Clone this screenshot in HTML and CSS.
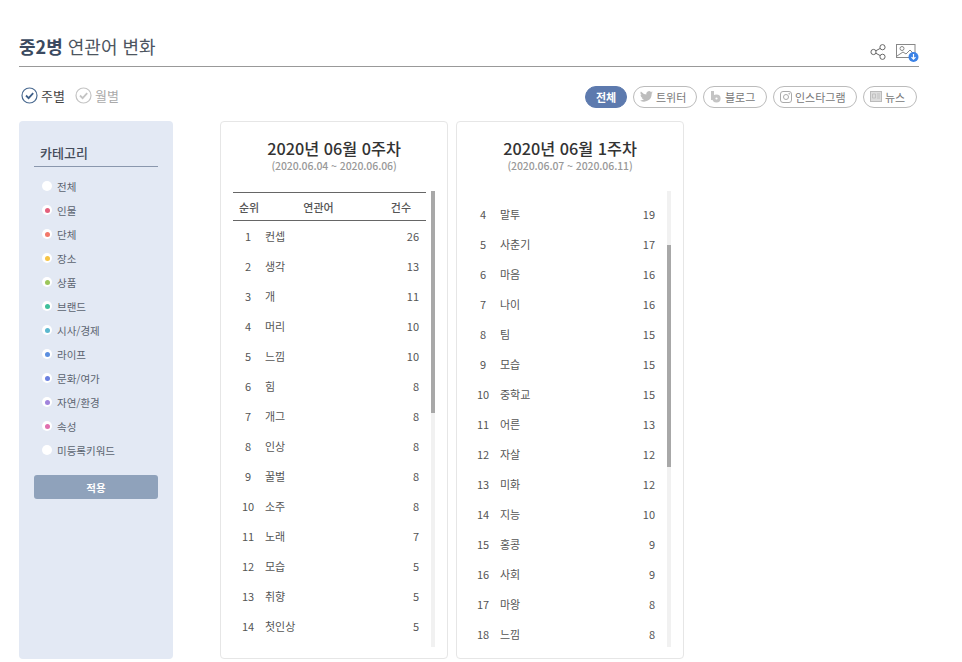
FILE: index.html
```html
<!DOCTYPE html>
<html lang="ko">
<head>
  <meta charset="UTF-8" />
  <title>중2병 연관어 변화</title>
  <link rel="stylesheet" href="styles.css">
</head>
<body>

<div class="container">
  <div class="title-bar">
    <h1><strong>중2병</strong> 연관어 변화</h1>
    <div class="title-icons">
      <svg class="icon-share" width="16" height="16" viewBox="0 0 16 16" fill="none" stroke="#666" stroke-width="1">
        <circle cx="3.500" cy="8" r="2.600"/>
        <circle cx="12.500" cy="3.200" r="2.600"/>
        <circle cx="12.500" cy="12.800" r="2.600"/>
        <path d="M5.800 6.800 10.200 4.400M5.800 9.200l4.400 2.400"/>
      </svg>
      <span class="icon-image">
        <svg width="24" height="20" viewBox="0 0 24 20" fill="none">
          <rect x="1.500" y="1.500" width="18.500" height="13" stroke="#888"/>
          <circle cx="7" cy="5.500" r="2" stroke="#888"/>
          <path d="M2 13 8 9l3 2 4-4 5 5" stroke="#888"/>
          <circle cx="18.500" cy="14" r="5" fill="#3b82e6"/>
          <path d="M18.500 11v5M16.500 14.200l2 2 2-2" stroke="#fff" stroke-width="1.200"/>
        </svg>
      </span>
    </div>
  </div>

  <div class="filter-bar">
    <div class="period">
      <span class="period-item active">
        <svg width="17" height="17" viewBox="0 0 17 17" fill="none">
          <circle cx="8.500" cy="8.500" r="7.500" stroke="#4a6a90" stroke-width="1.200"/>
          <path d="M5 8.500l2.600 2.600L12.200 6.200" stroke="#3f5f88" stroke-width="1.800"/>
        </svg>
        주별
      </span>
      <span class="period-item">
        <svg width="17" height="17" viewBox="0 0 17 17" fill="none">
          <circle cx="8.500" cy="8.500" r="7.500" stroke="#c4c4c4" stroke-width="1.200"/>
          <path d="M5 8.500l2.600 2.600L12.200 6.200" stroke="#c4c4c4" stroke-width="1.800"/>
        </svg>
        월별
      </span>
    </div>
    <div class="channels">
      <span class="pill selected">전체</span>
      <span class="pill">
        <svg width="13" height="11" viewBox="0 0 24 20" fill="#bdbdbd"><path d="M24 2.400a9.800 9.800 0 0 1-2.800.8A4.900 4.900 0 0 0 23.300.5a9.800 9.800 0 0 1-3.100 1.200 4.900 4.900 0 0 0-8.400 4.500A14 14 0 0 1 1.700.9a4.900 4.900 0 0 0 1.500 6.600 4.900 4.900 0 0 1-2.200-.6v.1a4.900 4.900 0 0 0 3.900 4.800 4.900 4.900 0 0 1-2.200.1 4.900 4.900 0 0 0 4.600 3.400A9.900 9.900 0 0 1 0 17.300 14 14 0 0 0 21.500 4.900v-.6A10 10 0 0 0 24 2.400z"/></svg>
        트위터
      </span>
      <span class="pill">
        <svg width="12" height="13" viewBox="0 0 12 13" fill="none" stroke="#c4c4c4"><path d="M2.500 1v9" stroke-width="3"/><circle cx="6.500" cy="8.500" r="2.600" stroke-width="3"/></svg>
        블로그
      </span>
      <span class="pill">
        <svg width="12" height="12" viewBox="0 0 12 12" fill="none" stroke="#aaa"><rect x=".5" y=".5" width="11" height="11" rx="2.500"/><circle cx="6" cy="6" r="2.500"/><circle cx="9.200" cy="2.800" r=".4"/></svg>
        인스타그램
      </span>
      <span class="pill">
        <svg width="12" height="11" viewBox="0 0 12 11" fill="#ddd" stroke="#bbb"><rect x=".5" y=".5" width="11" height="10"/><path d="M2.500 3h3v4h-3zM7 3h3M7 5h3M7 7h3" stroke-width=".8"/></svg>
        뉴스
      </span>
    </div>
  </div>

  <div class="content">
    <aside class="sidebar">
      <h2>카테고리</h2>
      <ul class="category-list">
        <li><i class="dot"></i>전체</li>
        <li><i class="dot c-person"></i>인물</li>
        <li><i class="dot c-group"></i>단체</li>
        <li><i class="dot c-place"></i>장소</li>
        <li><i class="dot c-goods"></i>상품</li>
        <li><i class="dot c-brand"></i>브랜드</li>
        <li><i class="dot c-news"></i>시사/경제</li>
        <li><i class="dot c-life"></i>라이프</li>
        <li><i class="dot c-culture"></i>문화/여가</li>
        <li><i class="dot c-nature"></i>자연/환경</li>
        <li><i class="dot c-attr"></i>속성</li>
        <li><i class="dot"></i>미등록키워드</li>
      </ul>
      <button class="apply-btn">적용</button>
    </aside>

    <section class="card">
      <h3>2020년 06월 0주차</h3>
      <p class="range">(2020.06.04 ~ 2020.06.06)</p>
      <div class="table-wrap">
        <div class="table-body">
          <div class="table-head">
            <span class="col-rank">순위</span>
            <span class="col-word">연관어</span>
            <span class="col-count">건수</span>
          </div>
          <ul class="rank-list">
            <li><span class="col-rank">1</span><span class="col-word">컨셉</span><span class="col-count">26</span></li>
            <li><span class="col-rank">2</span><span class="col-word">생각</span><span class="col-count">13</span></li>
            <li><span class="col-rank">3</span><span class="col-word">개</span><span class="col-count">11</span></li>
            <li><span class="col-rank">4</span><span class="col-word">머리</span><span class="col-count">10</span></li>
            <li><span class="col-rank">5</span><span class="col-word">느낌</span><span class="col-count">10</span></li>
            <li><span class="col-rank">6</span><span class="col-word">힘</span><span class="col-count">8</span></li>
            <li><span class="col-rank">7</span><span class="col-word">개그</span><span class="col-count">8</span></li>
            <li><span class="col-rank">8</span><span class="col-word">인상</span><span class="col-count">8</span></li>
            <li><span class="col-rank">9</span><span class="col-word">꿀벌</span><span class="col-count">8</span></li>
            <li><span class="col-rank">10</span><span class="col-word">소주</span><span class="col-count">8</span></li>
            <li><span class="col-rank">11</span><span class="col-word">노래</span><span class="col-count">7</span></li>
            <li><span class="col-rank">12</span><span class="col-word">모습</span><span class="col-count">5</span></li>
            <li><span class="col-rank">13</span><span class="col-word">취향</span><span class="col-count">5</span></li>
            <li><span class="col-rank">14</span><span class="col-word">첫인상</span><span class="col-count">5</span></li>
          </ul>
        </div>
        <div class="scroll-track"><div class="scroll-thumb"></div></div>
      </div>
    </section>

    <section class="card">
      <h3>2020년 06월 1주차</h3>
      <p class="range">(2020.06.07 ~ 2020.06.11)</p>
      <div class="table-wrap">
        <div class="table-body scrolled">
          <ul class="rank-list">
            <li><span class="col-rank">4</span><span class="col-word">말투</span><span class="col-count">19</span></li>
            <li><span class="col-rank">5</span><span class="col-word">사춘기</span><span class="col-count">17</span></li>
            <li><span class="col-rank">6</span><span class="col-word">마음</span><span class="col-count">16</span></li>
            <li><span class="col-rank">7</span><span class="col-word">나이</span><span class="col-count">16</span></li>
            <li><span class="col-rank">8</span><span class="col-word">팀</span><span class="col-count">15</span></li>
            <li><span class="col-rank">9</span><span class="col-word">모습</span><span class="col-count">15</span></li>
            <li><span class="col-rank">10</span><span class="col-word">중학교</span><span class="col-count">15</span></li>
            <li><span class="col-rank">11</span><span class="col-word">어른</span><span class="col-count">13</span></li>
            <li><span class="col-rank">12</span><span class="col-word">자살</span><span class="col-count">12</span></li>
            <li><span class="col-rank">13</span><span class="col-word">미화</span><span class="col-count">12</span></li>
            <li><span class="col-rank">14</span><span class="col-word">지능</span><span class="col-count">10</span></li>
            <li><span class="col-rank">15</span><span class="col-word">홍콩</span><span class="col-count">9</span></li>
            <li><span class="col-rank">16</span><span class="col-word">사회</span><span class="col-count">9</span></li>
            <li><span class="col-rank">17</span><span class="col-word">마왕</span><span class="col-count">8</span></li>
            <li><span class="col-rank">18</span><span class="col-word">느낌</span><span class="col-count">8</span></li>
          </ul>
        </div>
        <div class="scroll-track"><div class="scroll-thumb lower"></div></div>
      </div>
    </section>
  </div>
</div>

</body>
</html>
```

FILE: styles.css
```css
* {
  margin: 0;
  padding: 0;
  box-sizing: border-box;
}

html, body {
  background: #fff;
  font-family: "Noto Sans CJK KR", "Noto Sans", sans-serif;
  color: #555;
  height: 100%;
  overflow: hidden;
}

ul {
  list-style: none;
}

.container {
  width: 900px;
  margin-left: 19px;
  padding-top: 32px;
}

.title-bar {
  display: flex;
  justify-content: space-between;
  align-items: flex-end;
  height: 35px;
  border-bottom: 1px solid #999;
}

h1 {
  font-size: 18px;
  font-weight: 400;
  line-height: 30px;
  padding-bottom: 5px;
  color: #4d5560;
}

h1 strong {
  font-weight: 700;
  color: #3b4a60;
}

.title-icons {
  display: flex;
  align-items: flex-start;
  gap: 9px;
  height: 23px;
}

.icon-share {
  margin-top: 1px;
}

.icon-image {
  display: block;
  width: 24px;
}

.filter-bar {
  display: flex;
  justify-content: space-between;
  align-items: center;
  height: 54px;
  padding-left: 2px;
}

.period {
  display: flex;
  gap: 10px;
  margin-top: 2px;
}

.period-item {
  display: flex;
  align-items: center;
  gap: 3px;
  font-size: 13px;
  color: #aaa;
}

.period-item.active {
  color: #444;
}

.channels {
  display: flex;
  gap: 6px;
  margin-top: 5px;
  margin-right: 2px;
}

.pill {
  display: flex;
  align-items: center;
  gap: 3px;
  height: 22px;
  padding: 0 6px;
  width: 54px;
  border: 1px solid #bbb;
  border-radius: 11px;
  font-size: 11px;
  color: #777;
  background: #fff;
}

.pill:nth-child(2),
.pill:nth-child(3) {
  width: 64px;
}

.pill:nth-child(4) {
  width: 84px;
}

.pill.selected {
  width: 42px;
  justify-content: center;
  background: #5d7aae;
  border-color: #5d7aae;
  color: #fff;
  font-weight: 700;
}

.content {
  display: flex;
  align-items: flex-start;
  gap: 8px;
}

.sidebar {
  width: 154px;
  height: 538px;
  margin-right: 39px;
  padding: 21px 15px 0;
  background: #e3e9f4;
  border-radius: 4px;
}

.sidebar h2 {
  height: 25px;
  padding-left: 6px;
  border-bottom: 1px solid #8a97ad;
  font-size: 13px;
  font-weight: 500;
  line-height: 22px;
  color: #444c5a;
}

.category-list {
  margin-top: 7px;
  margin-bottom: 13px;
}

.category-list li {
  display: flex;
  align-items: center;
  gap: 5px;
  height: 24px;
  padding-left: 8px;
  font-size: 10.5px;
  color: #5b6470;
}

.dot {
  display: block;
  width: 10px;
  height: 10px;
  border-radius: 50%;
  background: #fff;
  color: transparent;
}

.dot::after {
  content: "";
  display: block;
  width: 5px;
  height: 5px;
  margin: 2.5px;
  border-radius: 50%;
  background: currentColor;
}

.c-person { color: #e4607c; }
.c-group { color: #f2786a; }
.c-place { color: #f6c445; }
.c-goods { color: #9cc65a; }
.c-brand { color: #3fbf9b; }
.c-news { color: #5bb8cf; }
.c-life { color: #5b8fe0; }
.c-culture { color: #6b80e0; }
.c-nature { color: #a184dc; }
.c-attr { color: #e06fae; }

.apply-btn {
  display: block;
  width: 124px;
  height: 24px;
  border: none;
  border-radius: 3px;
  background: #8fa2bb;
  color: #fff;
  font-family: inherit;
  font-size: 10.5px;
  font-weight: 700;
}

.card {
  width: 228px;
  height: 538px;
  padding: 15px 12px 0;
  background: #fff;
  border: 1px solid #e6e6e6;
  border-radius: 4px;
}

.card h3 {
  font-size: 16.25px;
  font-weight: 500;
  line-height: 22px;
  text-align: center;
  color: #333;
}

.range {
  font-size: 10.5px;
  line-height: 14px;
  text-align: center;
  color: #999;
  font-weight: 500;
  letter-spacing: -0.1px;
}

.table-wrap {
  display: flex;
  gap: 5px;
  height: 456px;
  margin-top: 18px;
}

.table-body {
  width: 194px;
  overflow: hidden;
  margin-top: 1px;
}

.table-body.scrolled {
  padding-top: 7px;
}

.scrolled .rank-list {
  margin-left: -1px;
}

.table-head {
  display: flex;
  align-items: center;
  height: 29px;
  border-top: 1px solid #666;
  border-bottom: 1px solid #666;
  font-size: 11px;
  font-weight: 500;
  color: #555;
}

.table-head .col-rank {
  width: 32px;
  flex: none;
}

.table-head .col-word {
  padding: 0;
  text-align: center;
}

.table-head .col-count {
  width: 54px;
  flex: none;
  padding-right: 15px;
}

.rank-list li {
  display: flex;
  align-items: center;
  height: 30px;
  font-size: 11px;
  color: #555;
}

.col-rank {
  width: 30px;
  text-align: center;
}

.col-word {
  flex: 1;
  padding-left: 2px;
}

.col-count {
  padding-right: 7px;
  text-align: right;
}

.scroll-track {
  width: 4px;
  height: 456px;
  background: #f1f1f1;
}

.scroll-thumb {
  height: 222px;
  background: #a8a8a8;
}

.scroll-thumb.lower {
  margin-top: 54px;
}
```
